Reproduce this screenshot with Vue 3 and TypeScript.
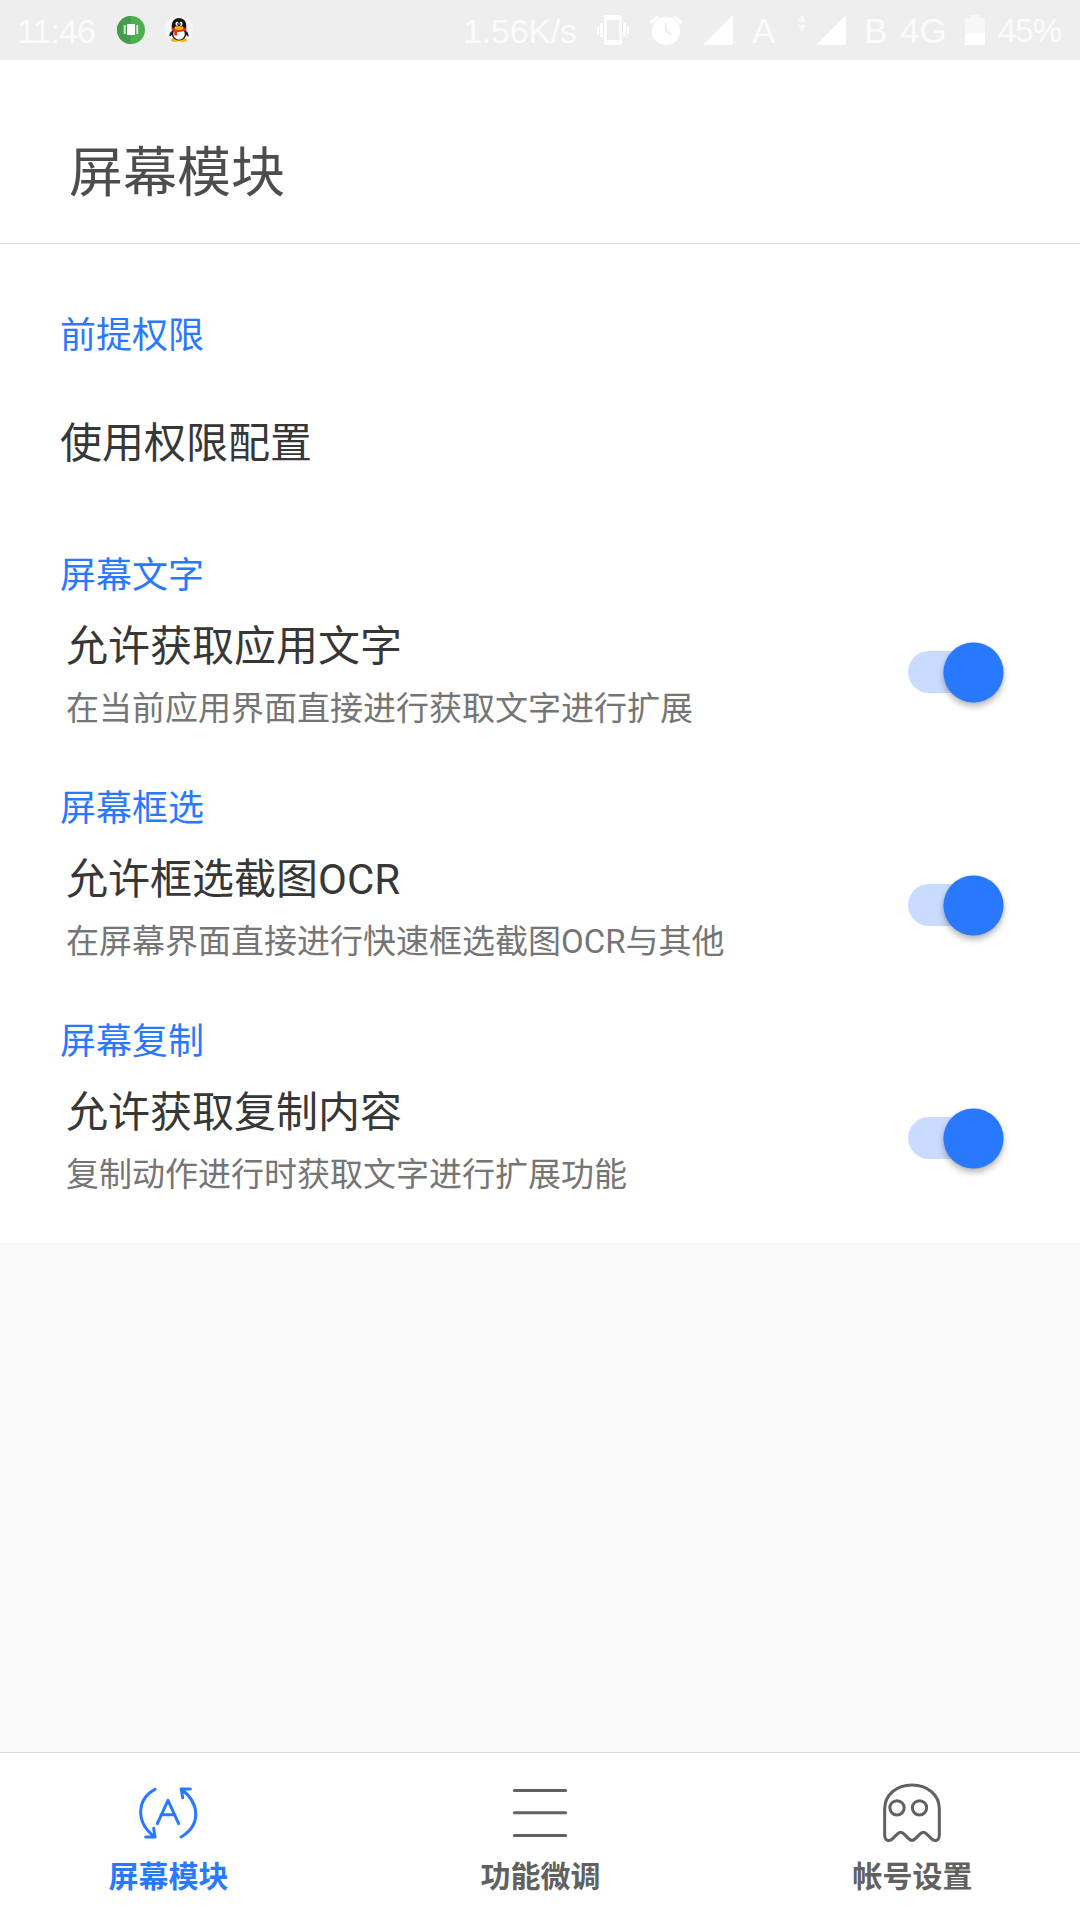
<script setup lang="ts">
import { ref } from 'vue'

interface Setting {
  section: string
  title: string
  summary: string
  enabled: boolean
}

const settings = ref<Setting[]>([
  { section: '屏幕文字', title: '允许获取应用文字', summary: '在当前应用界面直接进行获取文字进行扩展', enabled: true },
  { section: '屏幕框选', title: '允许框选截图OCR', summary: '在屏幕界面直接进行快速框选截图OCR与其他', enabled: true },
  { section: '屏幕复制', title: '允许获取复制内容', summary: '复制动作进行时获取文字进行扩展功能', enabled: true },
])

const tabs = ['屏幕模块', '功能微调', '帐号设置']
const active = ref(0)
</script>

<template>
  <div class="screen">
    <div class="status">
      <span class="st time">11:46</span>
      <svg class="app-icon" width="28" height="28" viewBox="0 0 28 28">
        <circle cx="14" cy="14" r="14" fill="#4caf50" />
        <path d="M14 0a14 14 0 0 0 0 28z" fill="#469d4b" />
        <path d="M6.7 9h2v9h-2zM19.2 9h2v9h-2z" fill="#cfe8d0" />
        <path d="M10 8h8v11h-8z" fill="#fff" />
      </svg>
      <svg class="qq" width="28" height="28" viewBox="0 0 28 28">
        <circle cx="14" cy="14" r="14" fill="#f7f7f7" />
        <path d="M6.5 15q-2.6 2.200-2.300 5.500q1.500 0 3-2.500zM21.500 15q2.600 2.200 2.300 5.500q-1.500 0-3-2.500z" fill="#15161c" />
        <ellipse cx="10" cy="24" rx="4" ry="1.900" fill="#fbb40c" />
        <ellipse cx="18" cy="24" rx="4" ry="1.900" fill="#fbb40c" />
        <ellipse cx="14" cy="17.500" rx="7.500" ry="7" fill="#15161c" />
        <ellipse cx="14" cy="18" rx="5.800" ry="5.700" fill="#fff" />
        <path d="M6.800 12C6 5.500 9.500 2 14 2s8 3.500 7.200 10l-2 3H9z" fill="#15161c" />
        <path d="M6.600 11.500q7.400 4 14.800 0v2.800q-5 2.200-9.400 1.700v3.500H9.200v-4.300q-1.600-.4-2.600-1.200z" fill="#ed3014" />
        <ellipse cx="12" cy="7.800" rx="1.500" ry="2.100" fill="#fff" />
        <ellipse cx="16" cy="7.800" rx="1.500" ry="2.100" fill="#fff" />
        <circle cx="12.500" cy="8" r=".7" fill="#15161c" />
        <circle cx="15.600" cy="8" r=".7" fill="#15161c" />
        <ellipse cx="14" cy="12" rx="4.600" ry="1.900" fill="#fbb40c" />
      </svg>
      <span class="st speed">1.56K/s</span>
      <svg class="vibrate" width="32" height="30" viewBox="0 0 32 30" fill="#fff">
        <path fill-rule="evenodd" d="M9 0h14a2 2 0 0 1 2 2v26a2 2 0 0 1-2 2H9a2 2 0 0 1-2-2V2a2 2 0 0 1 2-2zm.7 5v20h12.600V5z" />
        <path d="M3 8h3v14H3zM0 12h2v7H0zM26 8h3v14h-3zM30 12h2v7h-2z" />
      </svg>
      <svg class="alarm" width="34" height="30" viewBox="0 0 34 30">
        <circle cx="17" cy="16" r="14.200" fill="#fff" />
        <path d="M1.500 8l7.500-6.500M32.500 8L25 1.500" stroke="#fff" stroke-width="3.500" />
        <path d="M17 8v7.500l5 4.700" stroke="#eee" stroke-width="2.300" fill="none" />
      </svg>
      <svg class="signal-a" width="30" height="30" viewBox="0 0 30 30"><path d="M30 0v30H0z" fill="#fff" /></svg>
      <span class="st sim-a">A</span>
      <svg class="traffic" width="8" height="17" viewBox="0 0 8 17"><path d="M4 0l4 7H0zM0 10h8l-4 7z" fill="#f8f8f8" /></svg>
      <svg class="signal-b" width="30" height="30" viewBox="0 0 30 30"><path d="M30 0v30H0z" fill="#fff" /></svg>
      <span class="st sim-b">B</span>
      <span class="st net">4G</span>
      <svg class="battery" width="20" height="30" viewBox="0 0 20 30">
        <path d="M5 0h10v3h5v15H0V3h5z" fill="#f7f7f7" />
        <path d="M0 18h20v12H0z" fill="#fff" />
      </svg>
      <span class="st percent">45%</span>
    </div>

    <header class="header"><h1>屏幕模块</h1></header>

    <main class="content">
      <h2 class="section">前提权限</h2>
      <div class="link">使用权限配置</div>
      <section v-for="item in settings" :key="item.section" class="group">
        <h2 class="section">{{ item.section }}</h2>
        <div class="row">
          <div class="texts">
            <div class="title">{{ item.title }}</div>
            <div class="summary">{{ item.summary }}</div>
          </div>
          <button
            class="switch"
            :class="{ on: item.enabled }"
            role="switch"
            :aria-checked="item.enabled"
            @click="item.enabled = !item.enabled"
          ><span class="thumb"></span></button>
        </div>
      </section>
    </main>

    <nav class="tabs">
      <div
        v-for="(tab, i) in tabs"
        :key="tab"
        class="tab"
        :class="{ active: active === i }"
        @click="active = i"
      >
        <svg v-if="i === 0" class="icon" viewBox="165 123 198 198">
          <path d="M225 148C171 177 165 246 224 291M197 291H225L221 265M303 291C363 256 361 190 303 147M331 147H304L308 173M232 251L264 181L296 251M243 224H285" />
        </svg>
        <svg v-else-if="i === 1" class="icon" viewBox="171 123 198 198">
          <path d="M193 151.500H347M193 218.500H347M193 286.500H347" />
        </svg>
        <svg v-else class="icon ghost" viewBox="177 123 198 198">
          <path d="M194 207C194 163 231 135 276 135S358 163 358 207V284C358 303 344 306 334 296L321 283Q310 270 299 283L286 296Q276 306 266 296L253 283Q242 270 231 283L218 296C208 306 194 303 194 284Z" />
          <circle cx="231" cy="203.500" r="21.500" />
          <circle cx="298.500" cy="203.500" r="21.500" />
        </svg>
        <span class="label">{{ tab }}</span>
      </div>
    </nav>
  </div>
</template>

<style>
body {
  margin: 0;
  background: #fafafa;
}
</style>

<style scoped>
.screen {
  width: 1080px;
  height: 1920px;
  display: flex;
  flex-direction: column;
  overflow: hidden;
  background: #fafafa;
  font-family: Roboto, "Noto Sans CJK SC", sans-serif;
}
.status {
  height: 60px;
  flex: none;
  display: flex;
  align-items: center;
  background: #eee;
  color: #fbfbfb;
}
.status svg {
  display: block;
  flex: none;
}
.st {
  flex: none;
  font-family: "Liberation Sans", Arial, sans-serif;
  font-size: 35px;
  line-height: 62px;
  height: 60px;
  white-space: nowrap;
}
.time {
  box-sizing: border-box;
  width: 117px;
  padding-left: 17px;
  font-size: 34px;
  letter-spacing: -0.9px;
}
.qq { margin-left: 20px; }
.speed { margin-left: 270px; width: 134px; font-size: 34px; letter-spacing: -0.2px; }
.alarm { margin-left: 20px; }
.signal-a { margin-left: 20px; }
.sim-a { margin-left: 19px; width: 46px; }
.traffic { align-self: flex-start; margin-top: 15px; }
.signal-b { margin-left: 10px; }
.sim-b { margin-left: 18px; width: 36px; }
.net { width: 65px; }
.percent { margin-left: 13px; font-size: 33px; line-height: 61px; letter-spacing: -1px; }

.header {
  height: 183px;
  flex: none;
  background: #fff;
  border-bottom: 1px solid #dcdcdc;
  display: flex;
  align-items: center;
}
h1,
h2 {
  margin: 0;
  font-weight: 400;
}
h1 {
  margin: 44px 0 0 69px;
  font-size: 54px;
  line-height: 64px;
  color: #4d4d4d;
}
.content {
  height: 999px;
  flex: none;
  box-sizing: border-box;
  padding: 66px 76px 0 60px;
  background: #fff;
}
.section {
  font-size: 36px;
  line-height: 52px;
  color: #2979ff;
}
.link {
  margin-top: 52px;
  margin-bottom: 76px;
  font-size: 42px;
  line-height: 60px;
  color: #373737;
}
.group {
  height: 233px;
}
.row {
  display: flex;
  justify-content: space-between;
  padding-left: 6px;
}
.title {
  margin-top: 15px;
  font-size: 42px;
  line-height: 60px;
  color: #373737;
}
.summary {
  margin-top: 8px;
  font-size: 33px;
  line-height: 48px;
  color: #757575;
}
.switch {
  display: flex;
  align-items: center;
  width: 96px;
  height: 42px;
  margin-top: 49px;
  padding: 0;
  border: 0;
  background: linear-gradient(#ccc, #ccc) 0 0 / 84px 42px no-repeat;
  border-radius: 21px;
}
.switch.on {
  justify-content: flex-end;
  background-image: linear-gradient(#c9dcff, #c9dcff);
}
.thumb {
  width: 60px;
  height: 60px;
  flex: none;
  border-radius: 50%;
  background: #2979ff;
  box-shadow: 0 4px 6px rgba(0, 0, 0, 0.28), 0 0 2px rgba(0, 0, 0, 0.15);
  transform: translate(-0.5px, 0.5px);
}
.tabs {
  margin-top: auto;
  height: 167px;
  flex: none;
  display: grid;
  grid-template-columns: 336px 408px 336px;
  background: #fff;
  border-top: 1px solid #dcdcdc;
}
.tab {
  display: flex;
  flex-direction: column;
  align-items: center;
  padding-top: 28px;
  color: #616161;
}
.tab.active {
  color: #2979ff;
}
.icon {
  width: 66px;
  height: 66px;
  fill: none;
  stroke: currentColor;
  stroke-width: 9;
  stroke-linecap: round;
  stroke-linejoin: round;
}
.label {
  margin-top: 10px;
  padding-left: 1px;
  font-size: 30px;
  line-height: 40px;
  font-weight: 700;
}
</style>
